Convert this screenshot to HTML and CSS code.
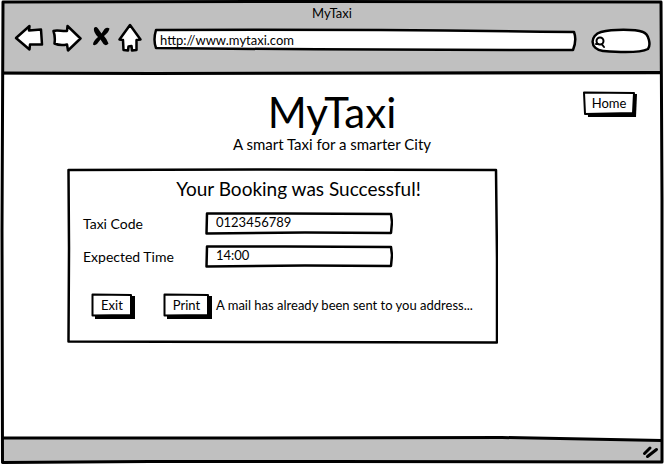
FILE: index.html
```html
<!DOCTYPE html>
<html lang="en">
<head>
<meta charset="utf-8">
<meta name="viewport" content="width=device-width, initial-scale=1">
<title>MyTaxi</title>
<link rel="stylesheet" href="styles.css">
</head>
<body>
<div class="window">
  <header class="chrome">
    <div class="window-title">MyTaxi</div>
    <div class="toolbar">
      <button class="tool" type="button" aria-label="Back">
        <svg width="30" height="28" viewBox="0 0 30 28"><path class="icon" d="M2 14 15.500 2 15 6.500 27 5.500 28 20.500 16 20.500 15.500 25.500Z"/></svg>
      </button>
      <button class="tool" type="button" aria-label="Forward">
        <svg width="30" height="28" viewBox="0 0 30 28"><path class="icon" d="M1.500 7C5 5.500 10 7.500 15 7L15.500 2 28.500 14.500 16 26.500 15 20.500Q8 22 2.500 19.500 3.500 13 1.500 7Z"/></svg>
      </button>
      <button class="tool stop" type="button" aria-label="Stop">
        <svg width="18" height="28" viewBox="0 0 18 28"><path class="cross" d="M2 4Q4 2 6 4.500L9.500 9.500 12.500 5Q15 3 17.500 4.500 17 8 12 12 15 15 16.500 19.500 14 22.500 11.500 20L8.500 15.500 5 20Q2.500 22 1 20.500 1 17 6 13 1 8 2 4Z"/></svg>
      </button>
      <button class="tool" type="button" aria-label="Home page">
        <svg width="24" height="30" viewBox="0 0 24 30"><path class="icon" d="M12 2 1.500 16.500 5 17 5.500 27 10 27.500 10.500 23.500 13.500 23 14 27.500 18.500 27 18.500 17 22.500 16.500Z"/></svg>
      </button>
      <div class="sketch address">
        <svg class="outline" viewBox="0 0 424 24" preserveAspectRatio="none" aria-hidden="true"><path class="line" d="M3 2Q200 1 421 4 424 12 420 22 200 22 3 20 0 12 3 2Z"/></svg>
        <input class="field" type="text" aria-label="Address" value="http://www.mytaxi.com">
      </div>
      <div class="sketch search">
        <svg class="outline" viewBox="0 0 60 26" preserveAspectRatio="none" aria-hidden="true"><path class="line" d="M10 4C22 1 44 1 52 4 58 6 60 17 57 21 47 26 24 24 12 23 -2 21 -1 7 10 4Z"/></svg>
        <svg class="lens" width="12" height="14" viewBox="0 0 12 14" aria-hidden="true"><circle cx="6" cy="5" r="3.500"/><path d="M2 8 4 8M8 8.500 10 11"/></svg>
        <input class="field" type="search" aria-label="Search">
      </div>
    </div>
    <svg class="rule" viewBox="0 0 660 4" preserveAspectRatio="none" aria-hidden="true"><path class="line" d="M0 2 150 2.500 400 2 660 1.500"/></svg>
  </header>

  <main class="page">
    <div class="masthead">
      <div class="brand">
        <h1>MyTaxi</h1>
        <p>A smart Taxi for a smarter City</p>
      </div>
      <button class="sketch button home" type="button">
        <svg class="outline" viewBox="0 0 54 26" preserveAspectRatio="none" aria-hidden="true"><path class="shade" d="M4 3H54L53 26H5Z"/><path class="face" d="M1 1.500 51 2 50 22 2 23Z"/></svg>
        <span>Home</span>
      </button>
    </div>

    <form class="sketch panel">
      <svg class="outline" viewBox="0 0 431 175" preserveAspectRatio="none" aria-hidden="true"><path class="line" d="M1.500 2 200 1.500 429 2 430 90 430 173.500 200 173 1.500 172.500 2 80Z"/></svg>
      <h2>Your Booking was Successful!</h2>
      <div class="rows">
        <label for="code">Taxi Code</label>
        <div class="sketch entry">
          <svg class="outline" viewBox="0 0 188 23" preserveAspectRatio="none" aria-hidden="true"><path class="line" d="M2 1.500 80 1.500 186 2 187 10 186 21 100 20.500 1.500 21.500Z"/></svg>
          <input class="field" id="code" type="text" value="0123456789">
        </div>
        <label for="time">Expected Time</label>
        <div class="sketch entry">
          <svg class="outline" viewBox="0 0 188 23" preserveAspectRatio="none" aria-hidden="true"><path class="line" d="M2 1.500 80 1.500 186 2 187 10 186 21 100 20.500 1.500 21.500Z"/></svg>
          <input class="field" id="time" type="text" value="14:00">
        </div>
      </div>
      <div class="actions">
        <button class="sketch button exit" type="button">
          <svg class="outline" viewBox="0 0 44 26" preserveAspectRatio="none" aria-hidden="true"><path class="shade" d="M4 3H44V26H4Z"/><path class="face" d="M1.500 1.500 40 2 40 22 1.500 22.500Z"/></svg>
          <span>Exit</span>
        </button>
        <button class="sketch button print" type="button">
          <svg class="outline" viewBox="0 0 49 26" preserveAspectRatio="none" aria-hidden="true"><path class="shade" d="M4 3H49V26H4Z"/><path class="face" d="M1.500 1.500 45 2 45 22 1.500 22.500Z"/></svg>
          <span>Print</span>
        </button>
        <span class="note">A mail has already been sent to you address...</span>
      </div>
    </form>
  </main>

  <footer class="status">
    <svg class="outline" viewBox="0 0 660 27" preserveAspectRatio="none" aria-hidden="true"><path class="bar" d="M0 2 200 2 500 1.500 660 4.500V27H0Z"/><path class="line" d="M0 2 200 2 500 1.500 660 4.500"/></svg>
    <svg class="grip" width="18" height="16" viewBox="0 0 18 16" aria-hidden="true"><path d="M2.500 9.500 8 4M5.500 12.500 14.500 5.500"/></svg>
  </footer>

  <svg class="outline frame" viewBox="0 0 664 465" preserveAspectRatio="none" aria-hidden="true"><path class="line" d="M3 2 330 1.500 661 2 662 200 662 462 330 461.500 150 461.500 2.500 462.500 2 230Z"/></svg>
</div>
</body>
</html>
```
FILE: styles.css
```css
* {
  box-sizing: border-box;
}

body {
  margin: 0;
  background: #fff;
  color: #000;
  font: 13px/16px Lato, "Open Sans", sans-serif;
}

h1,
h2,
p {
  margin: 0;
  font-weight: 400;
}

button,
input {
  font: inherit;
  color: inherit;
}

.window {
  position: relative;
  display: flex;
  flex-direction: column;
  min-height: 100vh;
  padding: 2px;
}

.sketch {
  position: relative;
  isolation: isolate;
}

.outline {
  position: absolute;
  inset: 0;
  width: 100%;
  height: 100%;
  pointer-events: none;
}

.sketch > .outline {
  z-index: -1;
}

.line {
  fill: none;
  stroke: #000;
  stroke-width: 3;
  stroke-linejoin: round;
  vector-effect: non-scaling-stroke;
}

.sketch .line {
  fill: #fff;
  stroke-width: 2.500;
}

.face {
  fill: #fff;
  stroke: #000;
  stroke-width: 2;
  stroke-linejoin: round;
}

.chrome {
  position: relative;
  padding: 3px 12px 20px;
  background: #c0c0c0;
}

.window-title {
  text-align: center;
}

.toolbar {
  display: flex;
  align-items: center;
  height: 34px;
}

.tool {
  display: flex;
  margin-right: 8px;
  padding: 0;
  border: 0;
  background: none;
}

.tool.stop {
  margin-left: 2px;
}

.icon {
  fill: #fff;
  stroke: #000;
  stroke-width: 2.500;
  stroke-linejoin: round;
}

.cross {
  fill: #000;
}

.field {
  display: block;
  width: 100%;
  height: 100%;
  padding: 0;
  border: 0;
  outline: 0;
  background: none;
}

.address {
  flex: 1;
  height: 24px;
  margin: 4px 14px 0 3px;
  padding-left: 7px;
}

.search {
  width: 60px;
  height: 26px;
  margin: 5px -1px 0 0;
  padding: 4px 8px 4px 18px;
}

.lens {
  position: absolute;
  left: 3px;
  top: 8px;
  fill: none;
  stroke: #000;
  stroke-width: 2;
  stroke-linecap: round;
}

.rule {
  position: absolute;
  left: 0;
  bottom: 0;
  width: 100%;
  height: 4px;
}

.page {
  flex: 1;
  padding: 16px 25px;
}

.masthead {
  display: grid;
  grid-template-columns: 1fr auto 1fr;
  align-items: start;
}

.brand {
  grid-column: 2;
  text-align: center;
}

.brand h1 {
  font-size: 42px;
  line-height: 43px;
}

.brand p {
  font-size: 15px;
  line-height: 20px;
}

.button {
  height: 26px;
  padding: 0 2px 2px 0;
  border: 0;
  background: none;
}

.home {
  justify-self: end;
  width: 54px;
}

.panel {
  width: 431px;
  max-width: 100%;
  margin: 14px 0 0 40px;
  padding: 8px 0 25px 16px;
}

.panel h2 {
  padding-left: 16px;
  font-size: 19px;
  line-height: 26px;
  text-align: center;
}

.rows {
  display: grid;
  grid-template-columns: 122px 188px;
  row-gap: 10px;
  align-items: center;
  margin-top: 10px;
}

.rows label {
  font-size: 14px;
}

.entry {
  height: 23px;
  padding: 0 10px 3px 11px;
}

.actions {
  display: flex;
  align-items: center;
  margin-top: 25px;
  padding-left: 8px;
}

.exit {
  width: 44px;
  margin-right: 28px;
}

.print {
  width: 49px;
  margin-right: 4px;
}

.note {
  padding-bottom: 2px;
  white-space: nowrap;
}

.status {
  position: relative;
  display: flex;
  justify-content: flex-end;
  align-items: center;
  height: 27px;
  padding: 4px 2px 0 0;
}

.bar {
  fill: #c0c0c0;
}

.grip {
  position: relative;
  fill: none;
  stroke: #000;
  stroke-width: 3;
  stroke-linecap: round;
}
```
